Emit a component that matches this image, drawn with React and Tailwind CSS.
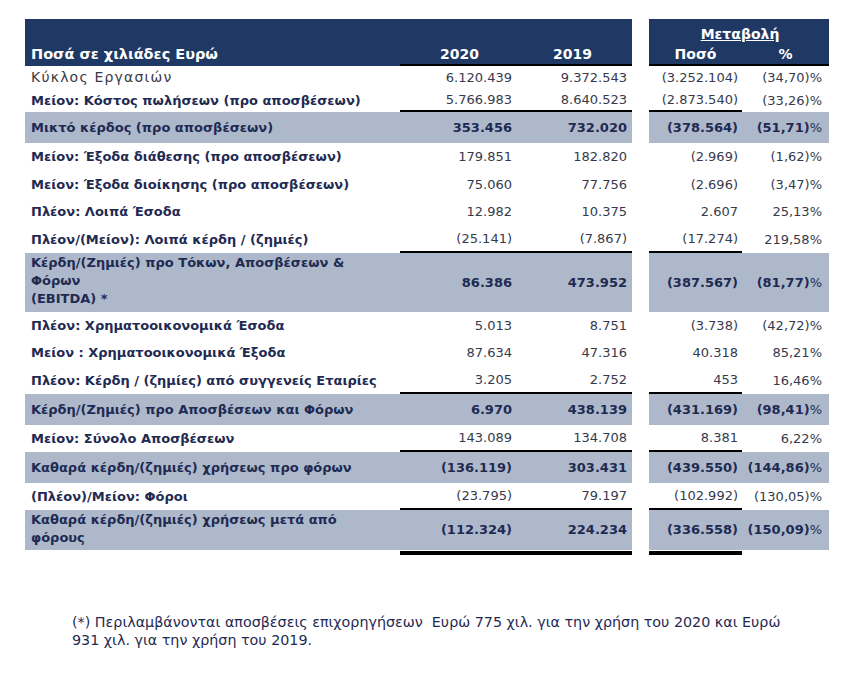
import React from "react";

const rows = [
  { label: ["Κύκλος Εργασιών"], v: ["6.120.439", "9.372.543", "(3.252.104)", "(34,70)%"], h: "h-[23px]", regular: true },
  { label: ["Μείον: Κόστος πωλήσεων (προ αποσβέσεων)"], v: ["5.766.983", "8.640.523", "(2.873.540)", "(33,26)%"], h: "h-[23px]" },
  { label: ["Μικτό κέρδος (προ αποσβέσεων)"], v: ["353.456", "732.020", "(378.564)", "(51,71)%"], h: "h-[31px]", gray: true },
  { label: ["Μείον: Έξοδα διάθεσης (προ αποσβέσεων)"], v: ["179.851", "182.820", "(2.969)", "(1,62)%"], h: "h-[28px]" },
  { label: ["Μείον: Έξοδα διοίκησης (προ αποσβέσεων)"], v: ["75.060", "77.756", "(2.696)", "(3,47)%"], h: "h-[27px]" },
  { label: ["Πλέον: Λοιπά Έσοδα"], v: ["12.982", "10.375", "2.607", "25,13%"], h: "h-[28px]" },
  { label: ["Πλέον/(Μείον): Λοιπά κέρδη / (ζημιές)"], v: ["(25.141)", "(7.867)", "(17.274)", "219,58%"], h: "h-[27px]" },
  { label: ["Κέρδη/(Ζημιές) προ Τόκων, Αποσβέσεων &", "Φόρων", "(EBITDA) *"], v: ["86.386", "473.952", "(387.567)", "(81,77)%"], h: "h-[59px]", gray: true },
  { label: ["Πλέον: Χρηματοοικονομικά Έσοδα"], v: ["5.013", "8.751", "(3.738)", "(42,72)%"], h: "h-[27px]" },
  { label: ["Μείον : Χρηματοοικονομικά Έξοδα"], v: ["87.634", "47.316", "40.318", "85,21%"], h: "h-[28px]" },
  { label: ["Πλέον: Κέρδη / (ζημίες) από συγγενείς Εταιρίες"], v: ["3.205", "2.752", "453", "16,46%"], h: "h-[27px]" },
  { label: ["Κέρδη/(Ζημιές) προ Αποσβέσεων και Φόρων"], v: ["6.970", "438.139", "(431.169)", "(98,41)%"], h: "h-[31px]", gray: true },
  { label: ["Μείον: Σύνολο Αποσβέσεων"], v: ["143.089", "134.708", "8.381", "6,22%"], h: "h-[27px]" },
  { label: ["Καθαρά κέρδη/(ζημιές) χρήσεως προ φόρων"], v: ["(136.119)", "303.431", "(439.550)", "(144,86)%"], h: "h-[31px]", gray: true },
  { label: ["(Πλέον)/Μείον: Φόροι"], v: ["(23.795)", "79.197", "(102.992)", "(130,05)%"], h: "h-[27px]" },
  { label: ["Καθαρά κέρδη/(ζημιές) χρήσεως μετά από", "φόρους"], v: ["(112.324)", "224.234", "(336.558)", "(150,09)%"], h: "h-[40px]", gray: true },
];

const GRID = "grid grid-cols-[375px_113px_119px_17px_93px_87px]";

function Val({ text, bold }) {
  if (text.endsWith("%")) {
    return (
      <span>
        <span className={bold ? "font-bold" : ""}>{text.slice(0, -1)}</span>
        <span className="font-normal">%</span>
      </span>
    );
  }
  return <span className={bold ? "font-bold" : ""}>{text}</span>;
}

function Row({ r, lineBelow }) {
  const bg = r.gray ? "bg-[#adb9ca]" : "";
  const numColor = r.gray ? "text-[#1f2a52]" : "text-[#363a4c]";
  const line = lineBelow ? "border-b-2 border-black" : "";
  const multi = r.label.length > 1;
  return (
    <div className={`${GRID} ${r.h}`}>
      <div
        className={`${bg} pl-[6px] flex ${multi ? "flex-col justify-start pt-[1px] leading-[18px]" : "items-center"} ${
          r.regular ? "font-normal text-[#3a3a48] text-[14px] tracking-[1.2px]" : "font-bold text-[#1f2a52]"
        }`}
      >
        {r.label.map((l, i) => (
          <div key={i}>{l}</div>
        ))}
      </div>
      <div className={`${bg} ${line} ${numColor} flex items-center justify-end pr-[1px]`}>
        <Val text={r.v[0]} bold={r.gray} />
      </div>
      <div className={`${bg} ${line} ${numColor} flex items-center justify-end pr-[5px]`}>
        <Val text={r.v[1]} bold={r.gray} />
      </div>
      <div />
      <div className={`${bg} ${line} ${numColor} flex items-center justify-end pr-[4px]`}>
        <Val text={r.v[2]} bold={r.gray} />
      </div>
      <div className={`${bg} ${numColor} flex items-center justify-end pr-[7px]`}>
        <Val text={r.v[3]} bold={r.gray} />
      </div>
    </div>
  );
}

export default function App() {
  return (
    <div
      className="w-[864px] h-[674px] bg-white pt-[19px] pl-[25px] text-[13px]"
      style={{ fontFamily: '"DejaVu Sans", "Noto Sans", sans-serif' }}
    >
      {/* header */}
      <div className={`${GRID} h-[47px] text-white font-bold text-[14px]`}>
        <div className="bg-[#203864] flex items-end pl-[6px] pb-[2px] leading-[20px] text-[14.5px]">Ποσά σε χιλιάδες Ευρώ</div>
        <div className="bg-[#203864] border-b-2 border-black flex items-end justify-center leading-[20px] pl-[6px]">2020</div>
        <div className="bg-[#203864] border-b-2 border-black flex items-end justify-center leading-[20px]">2019</div>
        <div />
        <div className="col-span-2 bg-[#203864] border-b-2 border-black flex flex-col justify-end leading-[20px]">
          <div className="text-center underline pl-[2px]">Μεταβολή</div>
          <div className="grid grid-cols-[93px_87px]">
            <div className="text-center">Ποσό</div>
            <div className="text-center">%</div>
          </div>
        </div>
      </div>
      {rows.map((r, i) => (
        <Row key={i} r={r} lineBelow={rows[i + 1] && rows[i + 1].gray} />
      ))}
      <div className={`${GRID} h-[4px] mt-[1px]`}>
        <div />
        <div className="bg-black" />
        <div className="bg-black" />
        <div />
        <div className="bg-black" />
        <div />
      </div>
      <div className="mt-[58px] pl-[47px] text-[14.3px] leading-[18px] text-[#1f2a52]">
        <div>(*) Περιλαμβάνονται αποσβέσεις επιχορηγήσεων&nbsp; Ευρώ 775 χιλ. για την χρήση του 2020 και Ευρώ</div>
        <div>931 χιλ. για την χρήση του 2019.</div>
      </div>
    </div>
  );
}
